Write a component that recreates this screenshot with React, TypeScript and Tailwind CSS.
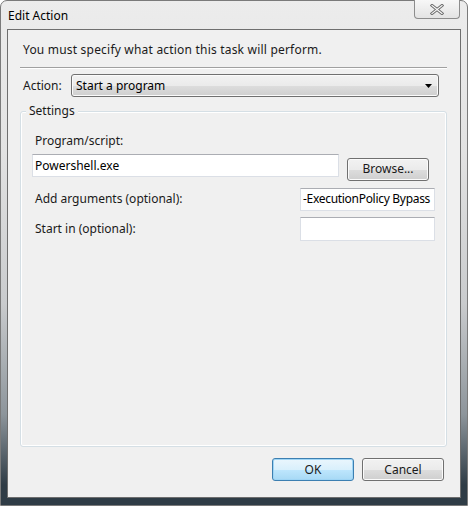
import React from 'react'

const font = { fontFamily: '"Noto Sans", "Open Sans", sans-serif' }

function Button({ label, primary }: { label: string; primary?: boolean }) {
  return (
    <button
      className={
        'w-[82px] h-[23px] rounded-[3px] border text-[12px] text-[#1a1a1a] ' +
        (primary
          ? 'border-[#3c7fb1] shadow-[inset_0_0_0_1px_#9fd5f5] bg-[linear-gradient(to_bottom,#eaf6fd_0%,#d9f0fc_50%,#bee6fd_51%,#a7d9f5_100%)]'
          : 'border-[#707070] shadow-[inset_0_0_0_1px_#fbfbfb] bg-[linear-gradient(to_bottom,#f2f2f2_0%,#ebebeb_50%,#dddddd_51%,#cfcfcf_100%)]')
      }
    >
      {label}
    </button>
  )
}

function TextBox({ value, className }: { value?: string; className: string }) {
  return (
    <div
      className={
        'h-[23px] bg-white border border-[#dbdfe6] border-t-[#abadb3] flex items-center px-[2px] text-[12px] text-black whitespace-nowrap overflow-hidden ' +
        className
      }
    >
      {value}
    </div>
  )
}

export default function App() {
  return (
    <div
      style={font}
      className="w-[468px] h-[506px] rounded-t-[7px] border border-[#7a7a7a] bg-[linear-gradient(to_bottom,#ececec_0%,#e2e2e2_30%,#c9cbcd_60%,#8d959b_82%,#2f3c46_96%)] flex flex-col"
    >
      <div className="h-[28px] flex items-start justify-between">
        <div className="pl-[7px] pt-[6px] text-[12px] text-black">Edit Action</div>
        <div className="mr-[7px] w-[46px] h-[19px] -mt-px rounded-b-[4px] border border-[#8c8c8c] border-t-0 bg-[linear-gradient(to_bottom,#f7f7f7,#e3e3e3)] flex items-center justify-center">
          <svg width="14" height="11" viewBox="0 0 14 11">
            <path d="M2 1.5 L12 9.5 M12 1.5 L2 9.5" stroke="#6a6a6a" strokeWidth="3" strokeLinecap="square" />
            <path d="M2 1.5 L12 9.5 M12 1.5 L2 9.5" stroke="#fafafa" strokeWidth="1.2" strokeLinecap="square" />
          </svg>
        </div>
      </div>

      <div className="mx-[6px] h-[469px] border border-[#6e6e6e] bg-[#f0f0f0] flex flex-col">
        <div className="pl-[15px] pt-[11px] h-[37px] text-[12px] text-[#1a1a1a] tracking-[0.2px]">
          You must specify what action this task will perform.
        </div>
        <div className="ml-[12px] mr-[13px] border-t border-[#a0a0a0] border-b border-b-white" />

        <div className="mt-[5px] flex items-center h-[23px]">
          <span className="pl-[15px] w-[63px] text-[12px] text-[#1a1a1a]">Action:</span>
          <div className="w-[368px] h-[23px] rounded-[3px] border border-[#707070] shadow-[inset_0_0_0_1px_#fbfbfb] bg-[linear-gradient(to_bottom,#f2f2f2_0%,#ebebeb_50%,#dddddd_51%,#cfcfcf_100%)] flex items-center justify-between pl-[4px] pr-[6px] text-[12px] text-black">
            <span>Start a program</span>
            <svg width="7" height="4" viewBox="0 0 7 4">
              <path d="M0 0 H7 L3.5 4 Z" fill="#000" />
            </svg>
          </div>
        </div>

        <div className="relative mt-[14px] ml-[12px] mr-[13px] h-[336px] rounded-[3px] border border-[#d5dfe5] shadow-[inset_0_0_0_1px_#fff]">
          <span className="absolute -top-[10px] left-[5px] px-[3px] bg-[#f0f0f0] text-[12px] text-[#1a1a1a]">
            Settings
          </span>
          <div className="pl-[14px] pt-[20px] text-[12px] text-[#1a1a1a] h-[42px]">Program/script:</div>
          <div className="flex items-start pl-[11px]">
            <TextBox value="Powershell.exe" className="w-[307px]" />
            <div className="ml-[8px] mt-px">
              <Button label="Browse..." />
            </div>
          </div>
          <div className="mt-[7px] flex items-center h-[23px]">
            <span className="pl-[14px] w-[279px] text-[12px] text-[#1a1a1a]">Add arguments (optional):</span>
            <TextBox value="-ExecutionPolicy Bypass" className="w-[135px] tracking-[-0.3px]" />
          </div>
          <div className="mt-[6px] flex items-center h-[24px]">
            <span className="pl-[14px] w-[279px] text-[12px] text-[#1a1a1a]">Start in (optional):</span>
            <TextBox className="w-[135px] h-[24px]" />
          </div>
        </div>

        <div className="mt-[11px] mr-[16px] flex justify-end gap-[8px]">
          <Button label="OK" primary />
          <Button label="Cancel" />
        </div>
      </div>
    </div>
  )
}
